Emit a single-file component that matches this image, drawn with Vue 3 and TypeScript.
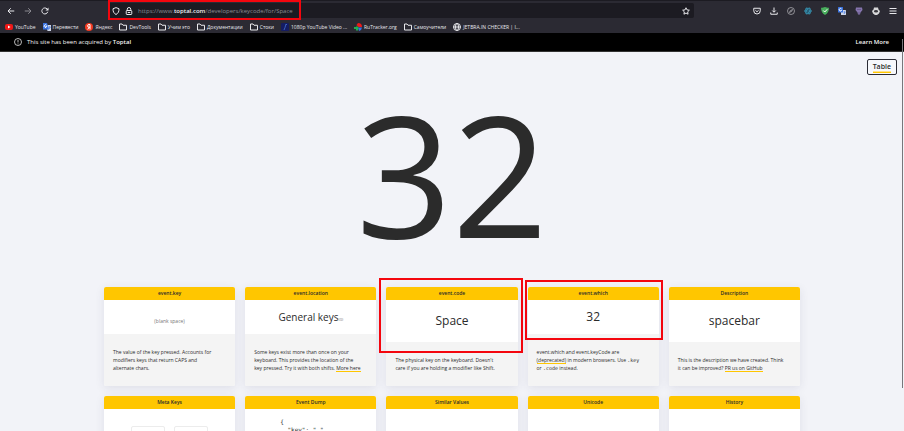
<script setup lang="ts">
interface Part {
  text: string
  kind?: 'link' | 'code' | 'break'
}

interface Card {
  title: string
  value: string
  size: 'tiny' | 'medium' | 'large'
  suffix?: string
  note: Part[]
  mark?: string
}

interface Bookmark {
  label: string
  icon: string
}

const bookmarks: Bookmark[] = [
  { label: 'YouTube', icon: 'youtube' },
  { label: 'Перевести', icon: 'translate' },
  { label: 'Яндекс', icon: 'yandex' },
  { label: 'DevTools', icon: 'folder' },
  { label: 'Учим это', icon: 'folder' },
  { label: 'Документации', icon: 'folder' },
  { label: 'Стоки', icon: 'folder' },
  { label: '1080p YouTube Video ...', icon: 'video' },
  { label: 'RuTracker.org', icon: 'rutracker' },
  { label: 'Самоучители', icon: 'folder' },
  { label: 'JETBRA.IN CHECKER | I...', icon: 'globe' },
]

const extensions = ['pocket', 'download', 'compass', 'react', 'shield', 'gtranslate', 'purple', 'mask', 'menu']

const cards: Card[] = [
  {
    title: 'event.key',
    value: '(blank space)',
    size: 'tiny',
    note: [
      { text: 'The value of the key pressed. Accounts for' },
      { text: '', kind: 'break' },
      { text: 'modifiers keys that return CAPS and' },
      { text: '', kind: 'break' },
      { text: 'alternate chars.' },
    ],
  },
  {
    title: 'event.location',
    value: 'General keys',
    size: 'medium',
    suffix: '(0)',
    note: [
      { text: 'Some keys exist more than once on your' },
      { text: '', kind: 'break' },
      { text: 'keyboard. This provides the location of the' },
      { text: '', kind: 'break' },
      { text: 'key pressed. Try it with both shifts. ' },
      { text: 'More here', kind: 'link' },
    ],
  },
  {
    title: 'event.code',
    value: 'Space',
    size: 'large',
    mark: 'mark-code',
    note: [
      { text: "The physical key on the keyboard. Doesn't" },
      { text: '', kind: 'break' },
      { text: 'care if you are holding a modifier like Shift.' },
    ],
  },
  {
    title: 'event.which',
    value: '32',
    size: 'large',
    mark: 'mark-which',
    note: [
      { text: 'event.which and event.keyCode are' },
      { text: '', kind: 'break' },
      { text: '(deprecated)', kind: 'link' },
      { text: ' in modern browsers. Use ' },
      { text: '.key', kind: 'code' },
      { text: '', kind: 'break' },
      { text: 'or ' },
      { text: '.code', kind: 'code' },
      { text: ' instead.' },
    ],
  },
  {
    title: 'Description',
    value: 'spacebar',
    size: 'large',
    note: [
      { text: 'This is the description we have created. Think' },
      { text: '', kind: 'break' },
      { text: 'it can be improved? ' },
      { text: 'PR us on GitHub', kind: 'link' },
    ],
  },
]

const lowerCards = ['Meta Keys', 'Event Dump', 'Similar Values', 'Unicode', 'History']
</script>

<template>
  <div class="window">
    <header class="browser">
      <div class="toolbar">
        <nav class="nav">
          <button type="button" aria-label="Back">
            <svg viewBox="0 0 16 16"><path d="M14.500 8H2.500M7.500 2.500 2 8l5.500 5.500" /></svg>
          </button>
          <button type="button" class="dim" aria-label="Forward">
            <svg viewBox="0 0 16 16"><path d="M1.500 8h12M8.500 2.500 14 8l-5.500 5.500" /></svg>
          </button>
          <button type="button" aria-label="Reload">
            <svg viewBox="0 0 16 16"><path d="M13.500 9.500a6 6 0 1 1-1.500-5.800L14 6" /><path class="solid" d="M15 1v6H9z" /></svg>
          </button>
        </nav>
        <div class="address">
          <svg viewBox="0 0 16 16"><path d="M8 1.200 14 3.500c0 6-1.500 9-6 11.500C3.500 12.500 2 9.500 2 3.500z" /></svg>
          <svg viewBox="0 0 16 16"><rect x="2.500" y="7" width="11" height="8" rx="1.500" /><path d="M4.500 7V4.500a3.500 3.500 0 0 1 7 0V7M5.500 11h5" /></svg>
          <span class="url">https://www.<b>toptal.com</b>/developers/keycode/for/Space</span>
          <button type="button" aria-label="Bookmark this page">
            <svg viewBox="0 0 16 16"><path d="m8 1.500 2 4.300 4.700.6-3.400 3.300.8 4.700L8 12.100l-4.100 2.300.8-4.700L1.300 6.400 6 5.800z" /></svg>
          </button>
          <span class="mark mark-url"></span>
        </div>
        <div class="extensions">
          <button v-for="name in extensions" :key="name" type="button" :aria-label="name">
            <svg v-if="name === 'pocket'" viewBox="0 0 16 16"><path d="M1.500 2.500h13v5a6.500 6.500 0 0 1-13 0zM4.800 6.500 8 9.500l3.200-3" /></svg>
            <svg v-else-if="name === 'download'" viewBox="0 0 16 16"><path d="M8 1v9M4.500 7 8 10.500 11.500 7M1.500 11v3.500h13V11" /></svg>
            <svg v-else-if="name === 'compass'" class="muted" viewBox="0 0 16 16"><circle cx="8" cy="8" r="7" /><path d="m5 11 1.500-3.500L11 5 9.500 8.500z" /></svg>
            <svg v-else-if="name === 'react'" viewBox="0 0 16 16">
              <g class="react"><circle cx="8" cy="8" r="2" /><ellipse cx="8" cy="8" rx="7" ry="3" /><ellipse cx="8" cy="8" rx="7" ry="3" transform="rotate(60 8 8)" /><ellipse cx="8" cy="8" rx="7" ry="3" transform="rotate(120 8 8)" /></g>
            </svg>
            <svg v-else-if="name === 'shield'" viewBox="0 0 16 16"><path class="green" d="M8 0c2 1 5 1.500 8 1.500C16 8 13.500 13 8 16 2.500 13 0 8 0 1.500 3 1.500 6 1 8 0z" /><path class="white-line" d="m4.500 7 3 3 5-5.500" /></svg>
            <svg v-else-if="name === 'gtranslate'" viewBox="0 0 16 16">
              <rect class="pale" x="6" y="6" width="10" height="10" rx="1" /><rect class="blue" width="10" height="11" rx="1" />
              <path class="white-line" d="M7 4a2.500 2.500 0 1 0 0 3H5" /><path class="blue-line" d="M11 10h4M13 9v1M12 14l2-4" />
            </svg>
            <svg v-else-if="name === 'purple'" viewBox="0 0 16 16"><path class="violet" d="M2 1h12l1 5-4 5-1 4H6l-1-4-4-5z" /><path class="dark-line" d="M5 5h2M9 5h2M7 12h2" /></svg>
            <svg v-else-if="name === 'mask'" viewBox="0 0 16 16"><path class="light" d="M4 1h8l1 4 3 3-2 5-4 3H6l-4-3-2-5 3-3z" /><ellipse class="dark" cx="8" cy="8.500" rx="4" ry="2.500" /></svg>
            <svg v-else viewBox="0 0 16 16"><path d="M1 3h14M1 8h14M1 13h14" /></svg>
          </button>
        </div>
      </div>
      <nav class="bookmarks">
        <a v-for="item in bookmarks" :key="item.label" href="#">
          <svg v-if="item.icon === 'youtube'" viewBox="0 0 16 16"><rect class="red" y="2" width="16" height="12" rx="4" /><path class="white" d="m6 5 5 3-5 3z" /></svg>
          <svg v-else-if="item.icon === 'translate'" viewBox="0 0 16 16">
            <path class="pale" d="M6 4h10v12H9z" /><path class="blue" d="M0 0h8l4 13H0z" /><path class="white-line" d="M7 4.500A2.600 2.600 0 1 0 7.500 7H5" /><path class="blue-line" d="M11 8h4M13 7v1M12 12l2.500-4" />
          </svg>
          <svg v-else-if="item.icon === 'yandex'" viewBox="0 0 16 16"><circle class="yandex" cx="8" cy="8" r="8" /><path class="white-line" d="M10 13V3H8a2.700 2.700 0 0 0 0 5.500h2M8 8.500 5.500 13" /></svg>
          <svg v-else-if="item.icon === 'folder'" viewBox="0 0 16 16"><path d="M1 14V2h5l2 2.500h7V14z" /></svg>
          <svg v-else-if="item.icon === 'video'" viewBox="0 0 16 16"><rect class="navy" width="16" height="16" rx="2" /><path class="blue-line" d="M10 2 8 9l-2 5M10 3h2" /></svg>
          <svg v-else-if="item.icon === 'rutracker'" viewBox="0 0 16 16"><path class="red" d="M8 0a8 8 0 0 1 8 8H9L5 4z" /><path class="blue" d="M8 9h8a8 8 0 0 1-6 7z" /><path class="leaf" d="M0 8h5V5l4 4-1 6H4v-3H0z" /></svg>
          <svg v-else viewBox="0 0 16 16"><circle cx="8" cy="8" r="7" /><ellipse cx="8" cy="8" rx="3" ry="7" /><path d="M1 8h14" /></svg>
          <span>{{ item.label }}</span>
        </a>
      </nav>
    </header>

    <div class="viewport">
      <div class="notice">
        <svg viewBox="0 0 16 16"><circle cx="8" cy="8" r="7" /><path d="M8 4v5M8 11v1.500" /></svg>
        <span>This site has been acquired by <b>Toptal</b></span>
        <a href="#">Learn More</a>
      </div>

      <main>
        <div class="actions">
          <button type="button" class="table-button"><span>Table</span></button>
        </div>
        <h1>32</h1>
        <section class="cards">
          <article v-for="card in cards" :key="card.title" class="card">
            <h2>{{ card.title }}</h2>
            <div class="value" :class="card.size">
              {{ card.value }}<small v-if="card.suffix">{{ card.suffix }}</small>
            </div>
            <p class="note">
              <template v-for="(part, i) in card.note" :key="i">
                <br v-if="part.kind === 'break'">
                <a v-else-if="part.kind === 'link'" href="#">{{ part.text }}</a>
                <code v-else-if="part.kind === 'code'">{{ part.text }}</code>
                <template v-else>{{ part.text }}</template>
              </template>
            </p>
            <span v-if="card.mark" class="mark" :class="card.mark"></span>
          </article>
          <article v-for="title in lowerCards" :key="title" class="card">
            <h2>{{ title }}</h2>
            <div v-if="title === 'Meta Keys'" class="meta"><span></span><span></span></div>
            <pre v-if="title === 'Event Dump'" class="dump">{
  "key": " ",</pre>
          </article>
        </section>
      </main>
      <div class="scrollbar"></div>
    </div>
  </div>
</template>

<style>
body {
  margin: 0;
  background: #f2f3f8;
}
</style>

<style scoped>
.window {
  display: flex;
  flex-direction: column;
  height: 100vh;
  overflow: hidden;
  font-family: "Open Sans", "Noto Sans", sans-serif;
  font-size: 5px;
  color: #2b2b2b;
}

button {
  display: flex;
  padding: 0;
  border: 0;
  background: none;
  color: inherit;
  font: inherit;
}

a {
  color: inherit;
  text-decoration: none;
}

svg {
  display: block;
  flex: none;
  width: 8px;
  height: 8px;
  fill: none;
  stroke: currentColor;
  stroke-width: 2;
}

.solid { fill: currentColor; stroke: none; }
.dim { opacity: 0.5; }
.muted { opacity: 0.7; stroke-width: 1.500; }
.react { stroke: #3c9bb8; stroke-width: 1.500; fill: #265e78; }
.green { fill: #48ad5c; stroke: none; }
.white { fill: #fff; stroke: none; }
.white-line { stroke: #fff; stroke-width: 2; }
.blue-line { stroke: #4775d8; stroke-width: 1.500; }
.dark-line { stroke: #3f3658; stroke-width: 1.500; }
.pale { fill: #cdd6e8; stroke: none; }
.blue { fill: #3b73df; stroke: none; }
.navy { fill: #151c63; stroke: none; }
.violet { fill: #8574ad; stroke: none; }
.light { fill: #d6d6d8; stroke: none; }
.dark { fill: #38373d; stroke: none; }
.red { fill: #f01818; stroke: none; }
.yandex { fill: #f43b22; stroke: none; }
.leaf { fill: #20b052; stroke: none; }

.browser {
  flex: none;
  border-top: 1px solid #1c1b22;
  background: #2b2a33;
  color: #e8e8ec;
}

.toolbar {
  display: flex;
  align-items: center;
  height: 19px;
}

.nav {
  display: flex;
  gap: 9px;
  width: 108px;
  padding-left: 7px;
  box-sizing: border-box;
}

.address {
  position: relative;
  display: flex;
  flex: 1;
  align-items: center;
  gap: 5px;
  height: 15px;
  padding: 0 4px;
  border-radius: 2px;
  background: #1c1b22;
}

.url {
  flex: 1;
  color: #8d8c93;
  font-size: 6px;
  line-height: 8px;
}

.url b {
  color: #f0f0f2;
  font-weight: 600;
}

.extensions {
  display: flex;
  gap: 9px;
  padding: 0 7px 0 59px;
}

.bookmarks {
  display: flex;
  align-items: center;
  gap: 7px;
  height: 13px;
  padding-left: 5px;
  font-weight: 500;
  line-height: 8px;
  white-space: nowrap;
}

.bookmarks a {
  display: flex;
  align-items: center;
  gap: 2px;
}

.viewport {
  position: relative;
  flex: 1;
  min-height: 0;
}

.notice {
  display: flex;
  align-items: center;
  gap: 5px;
  height: 18px;
  padding: 0 15px 0 14px;
  border-bottom: 1px solid #333;
  background: #000;
  color: #f4f4f4;
  font-size: 6px;
  font-weight: 500;
  line-height: 8px;
}

.notice svg {
  stroke-width: 1.500;
}

.notice b,
.notice a {
  font-weight: 600;
}

.notice a {
  margin-left: auto;
}

.actions {
  display: flex;
  justify-content: flex-end;
  padding: 7px 7px 0 0;
}

.table-button {
  padding: 1px 5px;
  border: 1px solid #2b2b35;
  border-radius: 2px;
  background: #f7f8fc;
  font-size: 7px;
  font-weight: 600;
  line-height: 11px;
}

.table-button span {
  border-bottom: 1px solid #ffc600;
  box-shadow: inset 0 -1px #ffe28a;
}

.note a {
  box-shadow: 0 1px #ffc600;
}

h1 {
  margin: 26px 0 42px;
  font-size: 168px;
  font-weight: 400;
  line-height: 144px;
  text-align: center;
}

.cards {
  display: grid;
  grid-template-columns: repeat(5, 1fr);
  grid-auto-rows: 99px;
  gap: 10px;
  max-width: 696px;
  margin: 0 auto;
}

.card {
  position: relative;
  display: flex;
  flex-direction: column;
  border-radius: 2px;
  background: #fff;
  box-shadow: 0 2px 10px rgba(50, 50, 93, 0.1);
}

.card h2 {
  margin: 0;
  border-radius: 2px 2px 0 0;
  background: #ffc600;
  font-size: 5px;
  font-weight: 600;
  line-height: 13px;
  text-align: center;
}

.value {
  display: flex;
  flex: 1;
  align-items: center;
  justify-content: center;
  font-size: 12px;
  line-height: 16px;
}

.value.medium {
  font-size: 10px;
}

.value.tiny {
  padding-top: 7px;
  color: #777;
  font-size: 5px;
}

.value small {
  align-self: flex-end;
  padding-bottom: 6px;
  color: #777;
  font-size: 4px;
}

.note {
  margin: 0;
  padding: 14px 9px;
  border-radius: 0 0 2px 2px;
  background: #f4f4f4;
  font-weight: 500;
  line-height: 8px;
  white-space: nowrap;
}

.note code {
  font-family: "DejaVu Sans Mono", monospace;
  font-size: 5px;
  line-height: 1px;
}

.meta {
  display: flex;
  justify-content: center;
  gap: 9px;
  padding-top: 17px;
}

.meta span {
  width: 32px;
  height: 32px;
  border: 1px solid #ececec;
  border-radius: 2px;
}

.dump {
  margin: 0;
  padding: 9px 0 0 35px;
  font-family: "DejaVu Sans Mono", monospace;
  font-size: 6px;
  line-height: 8px;
}

.mark {
  position: absolute;
  border: 2px solid #f4060e;
  box-sizing: border-box;
}

.mark-url {
  top: -3px;
  left: 0;
  width: 193px;
  height: 20px;
}

.mark-code {
  inset: -9px -5px 33px -7px;
}

.mark-which {
  inset: -7px -4px 46px -3px;
}

.scrollbar {
  position: absolute;
  top: 6px;
  right: 1px;
  width: 1px;
  height: 349px;
  background: #77777b;
}
</style>
